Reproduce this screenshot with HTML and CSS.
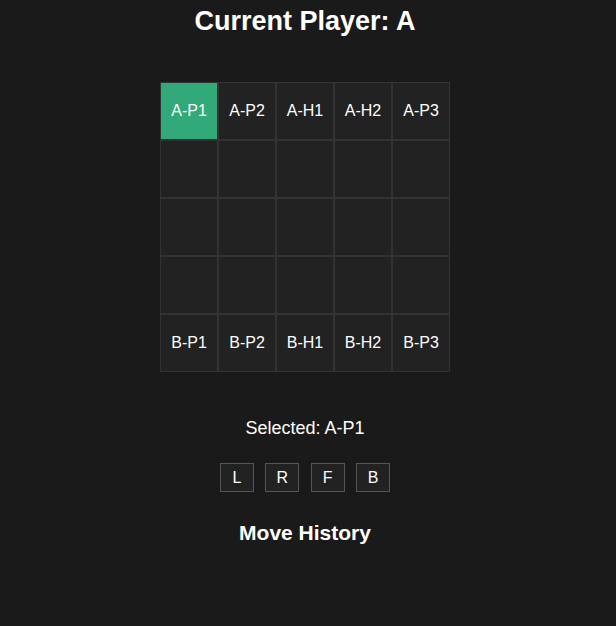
FILE: index.html
```html
<!DOCTYPE html>
<html>
<head>
<meta charset="utf-8">
<link rel="stylesheet" href="styles.css">
</head>
<body>
<div class="app">
  <h2 class="title">Current Player: A</h2>
  <div class="board">
    <div class="cell selected">A-P1</div>
    <div class="cell">A-P2</div>
    <div class="cell">A-H1</div>
    <div class="cell">A-H2</div>
    <div class="cell">A-P3</div>
    <div class="cell"></div><div class="cell"></div><div class="cell"></div><div class="cell"></div><div class="cell"></div>
    <div class="cell"></div><div class="cell"></div><div class="cell"></div><div class="cell"></div><div class="cell"></div>
    <div class="cell"></div><div class="cell"></div><div class="cell"></div><div class="cell"></div><div class="cell"></div>
    <div class="cell">B-P1</div>
    <div class="cell">B-P2</div>
    <div class="cell">B-H1</div>
    <div class="cell">B-H2</div>
    <div class="cell">B-P3</div>
  </div>
  <div class="selected-info">Selected: A-P1</div>
  <div class="moves">
    <button class="move">L</button>
    <button class="move">R</button>
    <button class="move">F</button>
    <button class="move">B</button>
  </div>
  <h3 class="history">Move History</h3>
</div>
</body>
</html>
```
FILE: styles.css
```css
html, body {
  margin: 0;
  padding: 0;
  background: #1a1a1a;
}
body {
  font-family: "Liberation Sans", Arial, sans-serif;
  font-size: 18px;
  color: #ffffff;
}
.app {
  width: 610px;
  display: flex;
  flex-direction: column;
  align-items: center;
  padding-top: 6px;
}
.title {
  margin: 0;
  font-size: 27px;
  font-weight: bold;
  line-height: 31px;
}
.board {
  margin-top: 45px;
  display: grid;
  grid-template-columns: repeat(5, 58px);
  grid-auto-rows: 58px;
}
.cell {
  box-sizing: border-box;
  border: 1px solid #333333;
  background: #222222;
  display: flex;
  align-items: center;
  justify-content: center;
  font-size: 16px;
  color: #ffffff;
}
.cell.selected {
  background: #32a978;
}
.selected-info {
  margin-top: 46px;
  font-size: 18px;
  line-height: 21px;
}
.moves {
  margin-top: 24px;
  display: flex;
  gap: 11.33px;
}
.move {
  box-sizing: border-box;
  width: 34px;
  height: 29px;
  font-family: "Liberation Sans", Arial, sans-serif;
  font-size: 16px;
  line-height: 18px;
  padding: 0;
  background: #222222;
  color: #ffffff;
  border: 1px solid #555555;
  border-radius: 0;
}
.history {
  margin: 29px 0 0;
  font-size: 21px;
  font-weight: bold;
  line-height: 24px;
}
```
